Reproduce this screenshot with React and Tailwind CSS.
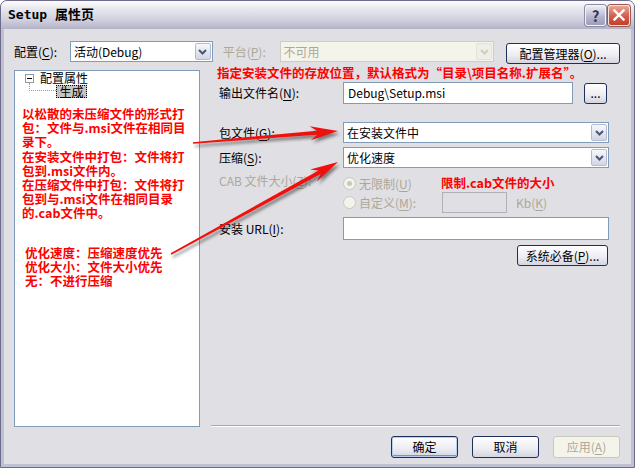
import React from 'react';

const grayText = 'text-[#aca899]';

function Mn({ children }) {
  return <u className="underline-offset-2">{children}</u>;
}

function DropButton({ disabled }) {
  return (
    <span
      className={`mr-[1px] flex h-[17px] w-[16px] items-center justify-center rounded-[2px] border ${
        disabled ? 'border-[#e2e1da] bg-[#efeee8]' : 'border-[#b4bcd4] bg-[linear-gradient(to_bottom,#f7f8fb,#d3d6e3)]'
      }`}
    >
      <svg width="9" height="6" viewBox="0 0 9 6">
        <path d="M1 1 L4.5 4.5 L8 1" fill="none" stroke={disabled ? '#cfcdc2' : '#4a5677'} strokeWidth="2" />
      </svg>
    </span>
  );
}

function Combo({ value, className = '', disabled }) {
  return (
    <div
      className={`flex h-[21px] items-center border ${
        disabled ? 'border-[#cfcdc2] bg-[#f5f4ea]' : 'border-[#7f9db9] bg-white'
      } ${className}`}
    >
      <span className={`flex-1 whitespace-nowrap pl-[3px] ${disabled ? grayText : 'text-black'}`}>{value}</span>
      <DropButton disabled={disabled} />
    </div>
  );
}

function XPButton({ children, className = '', disabled, isDefault }) {
  let tone = 'border-[#1d2f5a] bg-[linear-gradient(to_bottom,#ffffff,#eeeef3_55%,#d5d5e1)] text-black';
  if (disabled) tone = 'border-[#cac8bb] bg-[#f5f4ea] text-[#aca899]';
  if (isDefault) tone += ' shadow-[inset_0_0_0_1px_#b9cdf0,inset_0_-2px_0_#7191d8]';
  return (
    <div className={`flex items-center justify-center whitespace-nowrap rounded-[3px] border ${tone} ${className}`}>
      {children}
    </div>
  );
}

function Radio({ checked }) {
  return (
    <span className="flex h-[13px] w-[13px] items-center justify-center rounded-full border border-[#cac8bb] bg-[#f3f2ec]">
      {checked ? <span className="h-[5px] w-[5px] rounded-full bg-[#cac8bb]" /> : null}
    </span>
  );
}

function arrowPoints(x1, y1, x2, y2) {
  const dx = x2 - x1;
  const dy = y2 - y1;
  const len = Math.hypot(dx, dy);
  const ux = dx / len;
  const uy = dy / len;
  const px = -uy;
  const py = ux;
  const at = (d, w) => `${(x2 - ux * d + px * w).toFixed(1)},${(y2 - uy * d + py * w).toFixed(1)}`;
  const tail = (w) => `${(x1 + px * w).toFixed(1)},${(y1 + py * w).toFixed(1)}`;
  return [tail(0.8), at(21, 2), at(28, 7), at(0, 0), at(28, -7), at(21, -2), tail(-0.8)].join(' ');
}

const arrows = [
  [193, 143, 338, 131],
  [171, 254, 338, 162],
];

const treeNote = [
  '以松散的未压缩文件的形式打',
  '包：文件与.msi文件在相同目',
  '录下。',
  '在安装文件中打包：文件将打',
  '包到.msi文件内。',
  '在压缩文件中打包：文件将打',
  '包到与.msi文件在相同目录',
  '的.cab文件中。',
];

const compressNote = ['优化速度：压缩速度优先', '优化大小：文件大小优先', '无：不进行压缩'];

export default function App() {
  return (
    <div className="relative h-[468px] w-[635px] overflow-hidden bg-white font-['Noto_Sans_CJK_SC',sans-serif] text-[12px] text-black">
      <div className="flex h-full flex-col rounded-t-[7px] border border-[#6c6c8a] bg-[#c0c0d3]">
        {/* title bar */}
        <div className="flex h-[28px] shrink-0 items-center rounded-t-[6px] bg-[linear-gradient(to_bottom,#fdfdfe_0%,#e9e9f0_25%,#d2d2df_65%,#b3b3c8_100%)] pl-[7px] pr-[4px]">
          <span className="flex-1 font-['DejaVu_Sans_Mono','Noto_Sans_CJK_SC',monospace] text-[13px] font-bold text-black">
            Setup 属性页
          </span>
          <div className="flex gap-[2px]">
            <span className="flex h-[21px] w-[21px] items-center justify-center rounded-[3px] border border-[#f4f4f8] bg-[linear-gradient(to_bottom,#eeeef4,#b4b4c9_60%,#9d9db6)] text-[15px] font-bold leading-none text-[#2f3350] shadow-[0_0_0_1px_#8b8ba6]">
              ?
            </span>
            <span className="flex h-[21px] w-[22px] items-center justify-center rounded-[3px] border border-[#f6e3de] bg-[linear-gradient(to_bottom,#eba596,#d45b48_55%,#c23f2e)] shadow-[0_0_0_1px_#9a5a52]">
              <svg width="12" height="12" viewBox="0 0 12 12">
                <path d="M1.5 1.5 L10.5 10.5 M10.5 1.5 L1.5 10.5" stroke="#fff" strokeWidth="2.4" strokeLinecap="square" />
              </svg>
            </span>
          </div>
        </div>

        {/* client area */}
        <div className="mx-[3px] mb-[3px] flex flex-1 flex-col bg-[#e0dfe3] pl-[10px] pr-[11px] pt-[12px]">
          {/* top row */}
          <div className="flex items-start">
            <span className="w-[56px] whitespace-nowrap leading-[21px]">
              配置(<Mn>C</Mn>):
            </span>
            <Combo value="活动(Debug)" className="w-[143px]" />
            <span className={`ml-[10px] w-[57px] whitespace-nowrap leading-[21px] ${grayText}`}>
              平台(<Mn>P</Mn>):
            </span>
            <Combo value="不可用" className="w-[215px]" disabled />
            <XPButton className="ml-[12px] mt-[2px] h-[21px] w-[114px]">
              配置管理器(<Mn>O</Mn>)...
            </XPButton>
          </div>

          {/* main */}
          <div className="mt-[6px] flex h-[357px]">
            {/* tree */}
            <div className="flex w-[186px] shrink-0 flex-col border border-[#7f9db9] bg-white">
              <div className="flex h-[12px] items-center pl-[10px] pt-[2px]">
                <span className="flex h-[9px] w-[9px] items-center justify-center border border-[#919b9c] bg-white">
                  <span className="h-[1px] w-[5px] bg-black" />
                </span>
                <span className="ml-[6px] leading-none">配置属性</span>
              </div>
              <div className="mt-[2px] flex items-start pl-[14px]">
                <span className="-mt-[2px] h-[8px] w-[27px] border-b border-l border-dotted border-[#9a9a9a]" />
                <span className="flex h-[13px] w-[31px] items-center justify-center border border-dotted border-black bg-[#c4c4c4] leading-none">
                  生成
                </span>
              </div>
              <div className="mt-[9px] pl-[7px] text-[12.5px] font-bold leading-[14.2px] text-[#ff0000]">
                {treeNote.map((line) => (
                  <div key={line} className="h-[14.2px] whitespace-nowrap">
                    {line}
                  </div>
                ))}
              </div>
              <div className="mt-[25px] pl-[10px] text-[12.5px] font-bold leading-[14.2px] text-[#ff0000]">
                {compressNote.map((line) => (
                  <div key={line} className="h-[14.2px] whitespace-nowrap">
                    {line}
                  </div>
                ))}
              </div>
            </div>

            {/* property panel */}
            <div className="ml-[11px] flex w-[410px] flex-col">
              <div className="-mt-[4px] h-[14px] whitespace-nowrap pl-[6px] text-[12.5px] font-bold leading-[14px] text-[#ff0000]">
                {'指定安装文件的存放位置，默认格式为“目录\\项目名称.扩展名”。'}
              </div>

              <div className="mt-[2px] flex items-center">
                <span className="w-[132px] whitespace-nowrap pl-[8px]">
                  输出文件名(<Mn>N</Mn>):
                </span>
                <div className="flex h-[22px] w-[230px] items-center border border-[#7f9db9] bg-white pl-[4px]">
                  {'Debug\\Setup.msi'}
                </div>
                <XPButton className="ml-[11px] h-[21px] w-[23px]">...</XPButton>
              </div>

              <div className="mt-[18px] flex items-center">
                <span className="w-[132px] whitespace-nowrap pl-[8px]">
                  包文件(<Mn>G</Mn>):
                </span>
                <Combo value="在安装文件中" className="w-[266px]" />
              </div>

              <div className="mt-[4px] flex items-center">
                <span className="w-[132px] whitespace-nowrap pl-[8px]">
                  压缩(<Mn>S</Mn>):
                </span>
                <Combo value="优化速度" className="w-[266px]" />
              </div>

              <div className="mt-[7px] flex items-start">
                <span className={`w-[132px] whitespace-nowrap pl-[8px] leading-[12px] ${grayText}`}>
                  CAB 文件大小(<Mn>Z</Mn>):
                </span>
                <div className="flex flex-col">
                  <div className="flex h-[17px] items-center">
                    <div className={`flex w-[98px] items-center gap-[3px] ${grayText}`}>
                      <Radio checked />
                      <span className="whitespace-nowrap">
                        无限制(<Mn>U</Mn>)
                      </span>
                    </div>
                    <span className="whitespace-nowrap text-[12.5px] font-bold text-[#ff0000]">限制.cab文件的大小</span>
                  </div>
                  <div className="flex h-[21px] items-center">
                    <div className={`flex w-[99px] items-center gap-[3px] ${grayText}`}>
                      <Radio />
                      <span className="whitespace-nowrap">
                        自定义(<Mn>M</Mn>):
                      </span>
                    </div>
                    <div className="h-[21px] w-[65px] border border-[#aeb2b8]" />
                    <span className={`ml-[9px] whitespace-nowrap ${grayText}`}>
                      Kb(<Mn>K</Mn>)
                    </span>
                  </div>
                </div>
              </div>

              <div className="mt-[4px] flex items-center">
                <span className="w-[132px] whitespace-nowrap pl-[8px]">
                  安装 URL(<Mn>I</Mn>):
                </span>
                <div className="h-[23px] w-[266px] border border-[#7f9db9] bg-white" />
              </div>

              <XPButton className="ml-[306px] mt-[5px] h-[21px] w-[91px]">
                系统必备(<Mn>P</Mn>)...
              </XPButton>

              <div className="mt-auto h-[2px] border-b border-t border-b-white border-t-[#a9a8ad]" />
            </div>
          </div>

          {/* bottom buttons */}
          <div className="mt-[9px] flex justify-end gap-[14px]">
            <XPButton className="h-[22px] w-[67px]" isDefault>
              确定
            </XPButton>
            <XPButton className="h-[22px] w-[67px]">取消</XPButton>
            <XPButton className="h-[22px] w-[67px]" disabled>
              应用(<Mn>A</Mn>)
            </XPButton>
          </div>
        </div>
      </div>

      {/* annotation arrows */}
      <svg className="pointer-events-none absolute left-0 top-0" width="635" height="468" viewBox="0 0 635 468">
        <defs>
          <filter id="arrowShadow" x="-10%" y="-10%" width="120%" height="120%">
            <feGaussianBlur stdDeviation="1.6" />
          </filter>
        </defs>
        {arrows.map(([x1, y1, x2, y2]) => (
          <g key={`${x1}-${y1}`}>
            <polygon
              points={arrowPoints(x1 + 2, y1 + 3, x2 + 2, y2 + 3)}
              fill="rgba(40,40,40,0.55)"
              filter="url(#arrowShadow)"
            />
            <polygon points={arrowPoints(x1, y1, x2, y2)} fill="#f2100c" />
          </g>
        ))}
      </svg>
    </div>
  );
}
